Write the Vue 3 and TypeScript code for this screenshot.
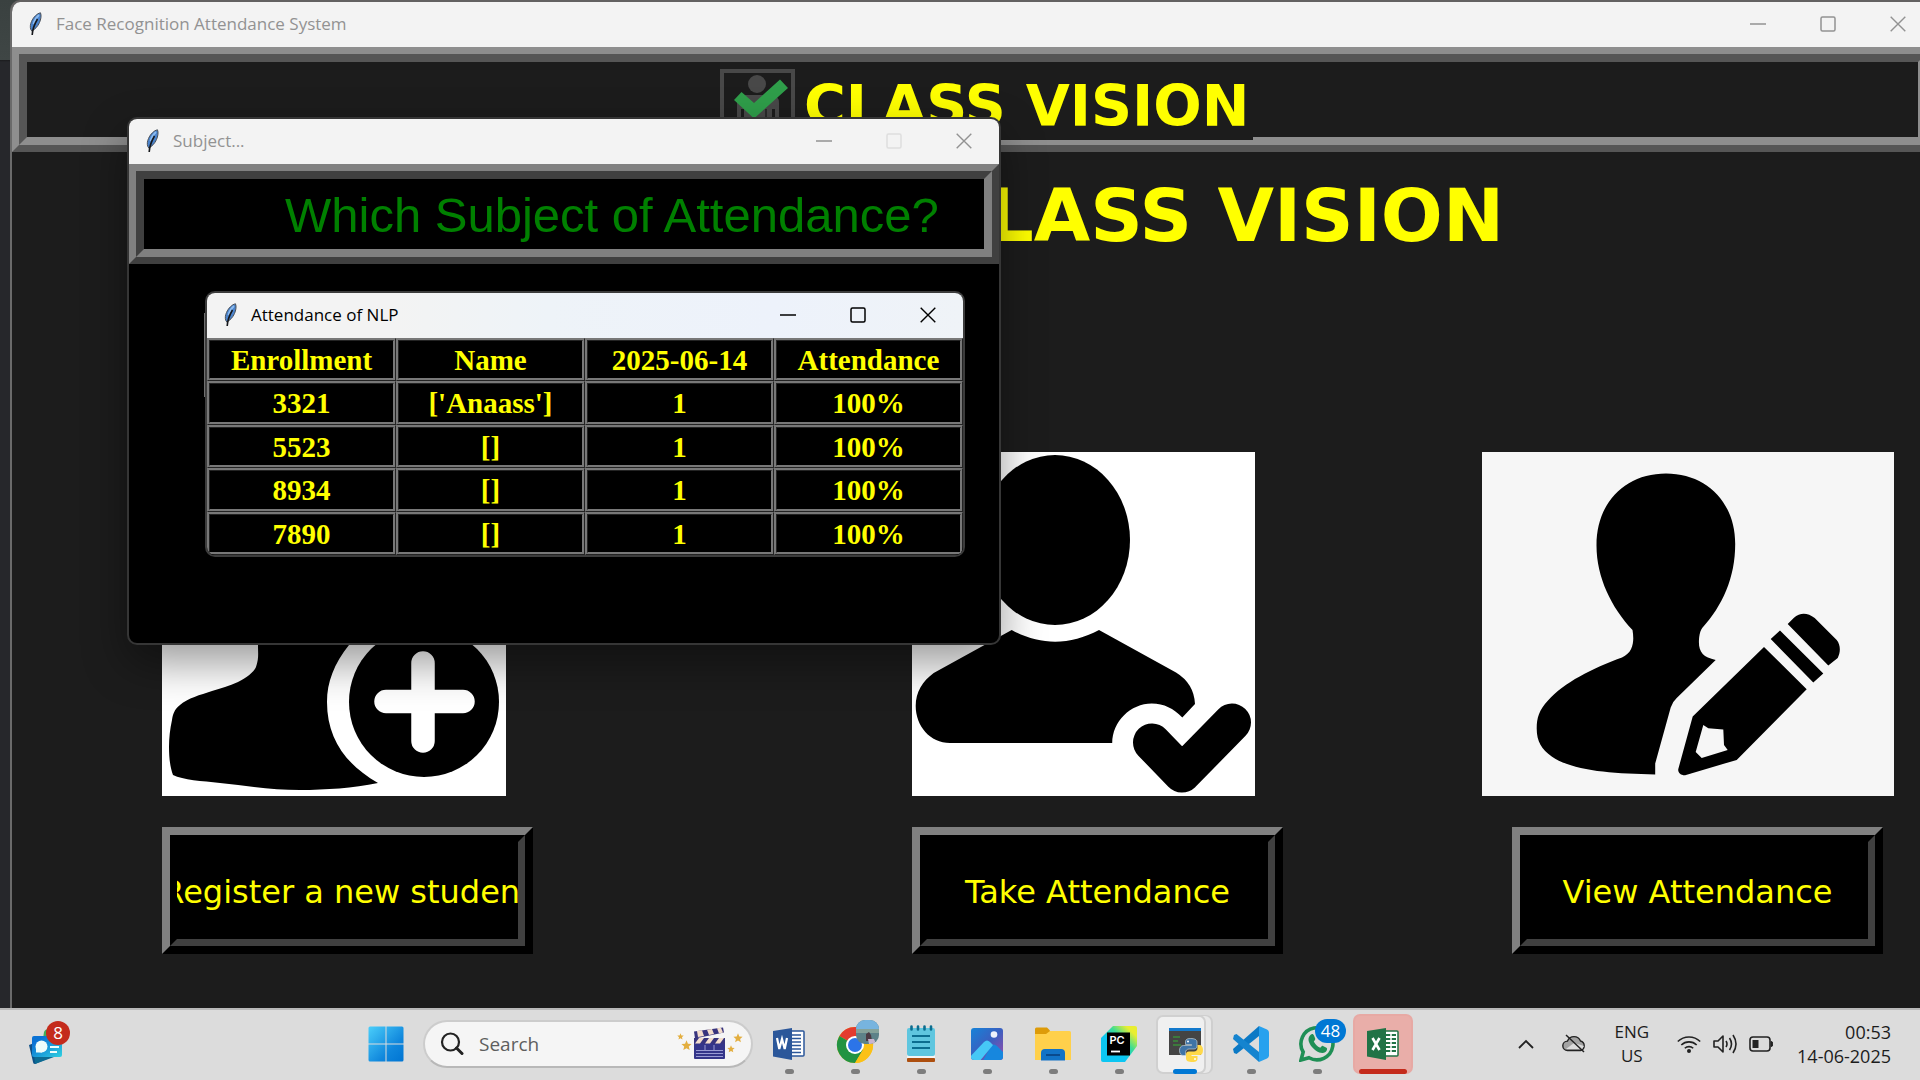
<script setup lang="ts">
interface AttendanceRow {
  enrollment: string
  name: string
  present: string
  percent: string
}

const columns: string[] = ['Enrollment', 'Name', '2025-06-14', 'Attendance']

const rows: AttendanceRow[] = [
  { enrollment: '3321', name: "['Anaass']", present: '1', percent: '100%' },
  { enrollment: '5523', name: '[]', present: '1', percent: '100%' },
  { enrollment: '8934', name: '[]', present: '1', percent: '100%' },
  { enrollment: '7890', name: '[]', present: '1', percent: '100%' },
]
</script>

<template>
  <div class="screen">
    <svg class="defs" width="0" height="0" aria-hidden="true">
      <symbol id="feather" viewBox="0 0 14 24">
        <path d="M12.5 .8C9 1.5 5.500 5 3.500 9.500 2.200 12.500 2 15 2.800 17.500l1 1.500c3-1.500 6-4.500 7.700-8.500C12.900 7.500 13.600 3.500 12.500.8z" fill="#4a83cc" stroke="#4a5058" stroke-width="1" />
        <path d="M11 3C8.500 5 6.500 8 5.500 12" fill="none" stroke="#8dbcf0" stroke-width="1.800" />
        <path d="M9.500 7C6.500 12 4.500 17 4.200 23" fill="none" stroke="#16181c" stroke-width="1.600" />
      </symbol>
      <symbol id="minimize" viewBox="0 0 16 16"><path d="M0 8h16" stroke="currentColor" stroke-width="1.300" /></symbol>
      <symbol id="maximize" viewBox="0 0 16 16"><rect x="1" y="1" width="14" height="14" rx="1.500" fill="none" stroke="currentColor" stroke-width="1.500" /></symbol>
      <symbol id="close" viewBox="0 0 16 16"><path d="M.7.700l14.600 14.600M15.300.700L.700 15.300" stroke="currentColor" stroke-width="1.400" /></symbol>
      <symbol id="star" viewBox="0 0 10 10"><path d="M5 .3l1.300 3.100 3.300.3-2.500 2.200.8 3.300L5 7.500 2.100 9.200l.8-3.300L.4 3.700l3.300-.3z" fill="#e3ae3f" /></symbol>
    </svg>

    <div class="desktop">
      <section class="window main-window" aria-label="Face Recognition Attendance System">
        <header class="titlebar inactive">
          <svg class="feather"><use href="#feather" /></svg>
          <span class="caption">Face Recognition Attendance System</span>
          <button type="button" aria-label="Minimize"><svg><use href="#minimize" /></svg></button>
          <button type="button" aria-label="Maximize"><svg><use href="#maximize" /></svg></button>
          <button type="button" aria-label="Close"><svg><use href="#close" /></svg></button>
        </header>

        <div class="ridge main-ridge">
          <div class="ridge-inner brand">
            <svg class="brand-logo" viewBox="0 0 76 74">
              <rect x="2" y="2" width="71" height="70" fill="none" stroke="#484848" stroke-width="4" />
              <circle cx="37" cy="15" r="9" fill="#484848" />
              <path d="M17 74V34q0-8 8-8h26q8 0 8 8v40h-4V40h-3v34H24V40h-3v34z" fill="#484848" />
              <path d="M28 74V48M34 74V50M40 74V48M46 74V40" stroke="#2a2a2a" stroke-width="2" />
              <path d="M14 31l7.500-8L34 34 60 10.500l8 8.500L34 49.500z" fill="#2f9e4a" />
            </svg>
            <span class="brand-name">CLASS VISION</span>
          </div>
        </div>

        <h1 class="headline">CLASS VISION</h1>

        <div class="cards">
          <div class="card">
            <svg class="art" viewBox="0 0 344 344" width="344" height="344">
              <rect width="344" height="344" fill="#fff" />
              <ellipse cx="138" cy="90" rx="72" ry="86" />
              <path d="M96 180v13c0 9 1 13-2 22-3 6-9 10-18 15-9 4-17 6-26 9-12 4-24 7-32 14-6 5-7 9-8 15-2 9-3 18-3 27 0 10 1 20 4 28 10 5 29 6 47 8 27 3 53 7 80 7 26 0 53-2 78-7l40-60V180z" />
              <path d="M262 153C225 153 202 173 187 193 172 212 165 230 165 250c0 36 18 62 51 81l30 8h98V153z" fill="#fff" />
              <circle cx="262" cy="250" r="75" />
              <path d="M261 211v78M224 249.500h77" stroke="#fff" stroke-width="23.500" stroke-linecap="round" />
            </svg>
            <button type="button" class="relief"><span>Register a new student</span></button>
          </div>
          <div class="card">
            <svg class="art" viewBox="0 0 343 344" width="343" height="344">
              <rect width="343" height="344" fill="#fff" />
              <ellipse cx="143" cy="88" rx="75" ry="85" />
              <path d="M99.700 178C128 193.500 158 193.500 187 178l77 42.500q18 11 19 31.500l-12.700 13.500c-9-9-18-14-30.600-14-21 0-39.500 18-39.500 39.500H38C18 291 3.700 274 3.700 254c0-14 7-25 18-33z" />
              <path d="M240 290.500l30 31 50-51" fill="none" stroke="#000" stroke-width="38" stroke-linecap="round" stroke-linejoin="round" />
            </svg>
            <button type="button" class="relief"><span>Take Attendance</span></button>
          </div>
          <div class="card card-shifted">
            <svg class="art" viewBox="0 0 412 344" width="412" height="344">
              <rect width="412" height="344" fill="#f6f6f6" />
              <path d="M184 21.400c-40 0-69.500 28-69.500 72 0 32 15 62 36 84.500 1.500 9 2 22-10.500 27.500-30 11-58 25-74 43-9 10-11.300 17-11.300 28 0 13 5 21 15 28 22 15 60 17 103.500 18v-11l15.500-56q2-6 6-9.500l39-38c-14-3-18-9-16.500-23 .5-4 1.500-7 3-9 20-22 33-50 33-84 0-42-29-70.500-69.200-70.500z" />
              <path d="M196.300 317l14.400-52.500L282 195l42.700 42.300-70 70.600L204 323c-4 1-8.500-2-7.700-6zM221.300 273l-7.600 27 6 6 26-8-3.700-5-.7-15.400-15-1.400z" fill-rule="evenodd" />
              <path d="M288.700 187l9.300-8.600 43.300 43.100-10 8.900zM305.700 172l6-6c7-6 14-5 21 0l22 22c4 5 4 12 1 18l-9.400 7.500z" />
            </svg>
            <button type="button" class="relief"><span>View Attendance</span></button>
          </div>
        </div>
      </section>

      <section class="window subject-window" aria-label="Subject">
        <header class="titlebar inactive">
          <svg class="feather"><use href="#feather" /></svg>
          <span class="caption">Subject...</span>
          <button type="button" aria-label="Minimize"><svg><use href="#minimize" /></svg></button>
          <button type="button" aria-label="Maximize" disabled><svg><use href="#maximize" /></svg></button>
          <button type="button" aria-label="Close"><svg><use href="#close" /></svg></button>
        </header>
        <div class="ridge">
          <div class="ridge-inner question">Which Subject of Attendance?</div>
        </div>
      </section>

      <div class="hidden-frame"></div>

      <section class="window table-window" aria-label="Attendance of NLP">
        <header class="titlebar active">
          <svg class="feather"><use href="#feather" /></svg>
          <span class="caption">Attendance of NLP</span>
          <button type="button" aria-label="Minimize"><svg><use href="#minimize" /></svg></button>
          <button type="button" aria-label="Maximize"><svg><use href="#maximize" /></svg></button>
          <button type="button" aria-label="Close"><svg><use href="#close" /></svg></button>
        </header>
        <table class="sheet">
          <thead>
            <tr><th v-for="column in columns" :key="column" scope="col">{{ column }}</th></tr>
          </thead>
          <tbody>
            <tr v-for="row in rows" :key="row.enrollment">
              <td>{{ row.enrollment }}</td>
              <td>{{ row.name }}</td>
              <td>{{ row.present }}</td>
              <td>{{ row.percent }}</td>
            </tr>
          </tbody>
        </table>
      </section>
    </div>

    <footer class="taskbar">
      <button type="button" class="widgets" aria-label="Widgets">
        <svg width="36" height="46" viewBox="0 0 36 46">
          <path d="M15 11q1-3 5-3h8v10H14z" fill="#3fae5a" />
          <path d="M0 24l8-3 17 14-19 8q-2 0-2-2z" fill="#0d4f86" />
          <path d="M5 33l20 3-19 7z" fill="#0c6b93" />
          <rect x="3" y="15" width="30" height="21" rx="2" fill="url(#wg)" />
          <circle cx="12.500" cy="25.500" r="6" fill="#eefdfb" /><path d="M7 31.500v-6h6v6z" fill="#eefdfb" />
          <path d="M21 26h9M21 31h7" stroke="#eefdfb" stroke-width="2" />
          <defs><linearGradient id="wg" x1="0" y1="0" x2="1" y2="1"><stop offset=".2" stop-color="#0a72d4" /><stop offset="1" stop-color="#2fd0e0" /></linearGradient></defs>
        </svg>
        <span class="badge badge-red">8</span>
      </button>

      <button type="button" class="start" aria-label="Start">
        <svg width="36" height="36" viewBox="0 0 36 36">
          <defs><linearGradient id="st" x1="0" y1="0" x2="36" y2="36" gradientUnits="userSpaceOnUse"><stop stop-color="#4cd0fb" /><stop offset=".65" stop-color="#0f86dc" /><stop offset="1" stop-color="#0074d2" /></linearGradient></defs>
          <path d="M2 .5h15.500v17H.500V2Q.500.500 2 .5zM18.500.500H34q1.500 0 1.500 1.500v15.500h-17zM.500 18.500h17v17H2Q.500 35.500.500 34zM18.500 18.500h17V34q0 1.500-1.500 1.500H18.500z" fill="url(#st)" />
        </svg>
      </button>

      <label class="search">
        <svg width="24" height="24" viewBox="0 0 24 24"><circle cx="10.500" cy="10" r="8.500" fill="none" stroke="#222" stroke-width="2.200" /><path d="M16.500 16l5.500 5.500" stroke="#222" stroke-width="3" stroke-linecap="round" /></svg>
        <input type="text" placeholder="Search" aria-label="Search" />
        <svg class="clapper" width="66" height="34" viewBox="0 0 66 34">
          <use href="#star" x="0" y="6" width="7" height="7" /><use href="#star" x="4" y="13" width="11" height="11" />
          <use href="#star" x="56" y="6" width="10" height="10" /><use href="#star" x="50" y="18" width="8" height="8" />
          <path d="M17 4.500L46 .5l1 5-29 6z" fill="#38347e" />
          <path d="M20 4l5-.7 2 5.600-6 1.200zM30 2.700l5-.7 2 5-5 1zM40 1.300l4-.6 2 4.800-4 1z" fill="#f3ddcb" />
          <rect x="17" y="11" width="31" height="21" rx="1" fill="#34358a" />
          <path d="M17 11h31v5.500H17z" fill="#38347e" /><path d="M22 11h5l-4 5.500h-5zM32 11h5l-4 5.500h-5zM42 11h5l-4 5.500h-5z" fill="#f3ddcb" />
          <path d="M19 23.500h27M19 26.500h27M19 29.500h27M28 18v5M37 18v5" stroke="#9a9cd4" stroke-width="1" />
        </svg>
      </label>

      <nav class="apps" aria-label="Pinned apps">
        <button type="button" class="app" aria-label="Word">
          <svg width="36" height="36" viewBox="0 0 36 36">
            <rect x="16" y="5" width="17" height="25" rx="1" fill="#fff" stroke="#2b579a" stroke-width="1.500" />
            <path d="M21 9h9M21 12.500h9M21 16h9M21 19.500h9M21 23h9M21 26.500h9" stroke="#2b579a" stroke-width="1.500" />
            <path d="M2 5l19-3v32L2 30.500z" fill="#2b579a" />
            <path d="M6 12l2.300 11 2.700-10 2.700 10L16 12" fill="none" stroke="#fff" stroke-width="2.200" />
          </svg>
        </button>
        <button type="button" class="app" aria-label="Chrome">
          <svg width="48" height="48" viewBox="0 0 48 48">
            <circle cx="24" cy="25" r="18" fill="#fbc116" />
            <path d="M24 25L8.400 16A18 18 0 0 1 39.600 16z" fill="#e33b2e" />
            <path d="M24 25L8.400 16A18 18 0 0 0 24 43l8-13z" fill="#229342" />
            <path d="M24 16h15.600A18 18 0 0 1 24 43l8-13.500z" fill="#fbc116" />
            <circle cx="24" cy="25" r="9" fill="#fff" /><circle cx="24" cy="25" r="7" fill="#2c74e8" />
            <clipPath id="av"><rect x="25" y="0" width="23" height="24" rx="9" /></clipPath>
            <g clip-path="url(#av)">
              <rect x="25" width="23" height="24" fill="#5d8289" />
              <path d="M25 0h23v9H25z" fill="#77b4df" /><path d="M25 9h23v4H25z" fill="#85a29a" />
              <path d="M35 14l3-2 2 3 1 6h-6z" fill="#4b3b44" /><path d="M37 19h6l2 5h-7z" fill="#c9b5cf" />
            </g>
          </svg>
        </button>
        <button type="button" class="app" aria-label="Notepad">
          <svg width="36" height="38" viewBox="0 0 36 38">
            <rect x="4" y="33" width="28" height="4" rx="1" fill="#ad4f0f" /><rect x="4" y="29" width="28" height="4" fill="#f4f4f4" />
            <rect x="4" y="3" width="28" height="28" rx="2" fill="#5fc6df" />
            <path d="M9 11h18M9 17h18M9 23h18" stroke="#0c6d8f" stroke-width="2" />
            <path d="M8.500 1.500v3M15 1.500v3M21.500 1.500v3M28 1.500v3" stroke="#0c6d8f" stroke-width="2.600" stroke-linecap="round" />
          </svg>
        </button>
        <button type="button" class="app" aria-label="Photos">
          <svg width="36" height="36" viewBox="0 0 36 36">
            <defs><linearGradient id="ph" x1="0" y1="0" x2="1" y2="1"><stop stop-color="#1683d8" /><stop offset=".5" stop-color="#3a5fc0" /><stop offset="1" stop-color="#a04ba8" /></linearGradient><clipPath id="phc"><rect x="2" y="2" width="32" height="32" rx="3" /></clipPath></defs>
            <g clip-path="url(#phc)"><rect x="2" y="2" width="32" height="32" fill="url(#ph)" />
              <path d="M12 38l10-18q3-3 6 0l10 10v8z" fill="#1787de" />
              <path d="M-2 34l17-18q3-3 6 0l3 3L10 36z" fill="#46c8f6" /></g>
            <circle cx="25" cy="8.500" r="3.300" fill="#eef1fb" />
          </svg>
        </button>
        <button type="button" class="app" aria-label="File Explorer">
          <svg width="36" height="36" viewBox="0 0 36 36">
            <path d="M0 3q0-1.500 1.500-1.500H12l3 3v5H0z" fill="#dd9b09" />
            <path d="M0 8h11l4-3h19.500Q36 5 36 6.500V34H0z" fill="#ffd04b" />
            <path d="M6 34.500V27q0-4 4-4h16q4 0 4 4v7.500z" fill="#1273c6" /><path d="M11 29h14" stroke="#0a4a8c" stroke-width="2" />
          </svg>
        </button>
        <button type="button" class="app" aria-label="PyCharm">
          <svg width="36" height="36" viewBox="0 0 36 36">
            <defs><linearGradient id="pc" x1="0" y1="1" x2="1" y2="0"><stop offset=".4" stop-color="#0cc6f2" /><stop offset=".62" stop-color="#3bdc94" /><stop offset=".85" stop-color="#e9ee30" /></linearGradient></defs>
            <path d="M12 0h22q2 0 2 2v18L24 36H2q-2 0-2-2V12z" fill="url(#pc)" />
            <rect x="6" y="6.500" width="23" height="23" />
            <text x="8.500" y="18" fill="#fff" font-family="Inter, sans-serif" font-weight="600" font-size="11">PC</text>
            <path d="M10 25.500h9" stroke="#fff" stroke-width="1.800" />
          </svg>
        </button>
        <button type="button" class="app app-active" aria-label="Python">
          <svg width="36" height="36" viewBox="0 0 36 36">
            <rect x="2" y="2" width="32" height="27" fill="#444" /><rect x="2" y="2" width="32" height="3" fill="#1379cc" />
            <path d="M6 11h7M6 15h5M6 19h8" stroke="#3a8c3a" stroke-width="1.300" />
            <path d="M23.500 12.500c-4 0-5 1.500-5 3.500v2.500h6v1h-8c-2.500 0-4 2-4 5s1.500 5 3.500 5h2.500v-3c0-2 1.500-3.500 3.500-3.500h5c2 0 3-1.300 3-3V16c0-2.500-2.500-3.500-6.500-3.500z" fill="#3f74a6" stroke="#d5e0e6" stroke-width=".6" />
            <path d="M25.500 36c4 0 5-1.500 5-3.500V30h-6v-1h8c2.500 0 3.500-2 3.500-5s-1.300-5-3.500-5h-2v3c0 2-1.500 3.500-3.500 3.500h-5c-2 0-3 1.300-3 3v4c0 2.500 2.500 3.500 6.500 3.500z" fill="#ffd94a" />
            <circle cx="21" cy="15.500" r="1" fill="#fff" /><circle cx="28" cy="33" r="1" fill="#fff" />
          </svg>
        </button>
        <button type="button" class="app" aria-label="Visual Studio Code">
          <svg width="36" height="36" viewBox="0 0 36 36">
            <path d="M26 0L0 23l1 4 2.500 1L26 10z" fill="#0b79c5" />
            <path d="M26 36L0 13l1-4 2.500-1L26 26z" fill="#1584cf" />
            <path d="M26 0l8 3.500q2 1 2 3v23q0 2-2 3L26 36z" fill="#27a1ee" />
          </svg>
        </button>
        <button type="button" class="app" aria-label="WhatsApp">
          <svg width="36" height="36" viewBox="0 0 36 36">
            <path d="M2 34l2.200-8A16 16 0 1 1 10 31.700z" fill="none" stroke="#1f8f55" stroke-width="3.600" />
            <path d="M12 8.500c1-1 2.500-.5 3 1l1.200 3c.3 1-.5 2-1.400 3 1.500 3 3.500 5 6.500 6.200 1-.9 1.600-2.200 2.700-1.800l3.500 1.800c1.200.8.500 3-1 4.200-2.500 2-6 1-9.500-1.200-4-2.800-7-7-7.500-10.700-.2-2.500 1-4.300 2.500-5.500z" fill="#1f8f55" />
          </svg>
          <span class="badge badge-blue">48</span>
        </button>
        <button type="button" class="app app-alert" aria-label="Excel">
          <svg width="36" height="36" viewBox="0 0 36 36">
            <rect x="16" y="5" width="17" height="25" rx="1" fill="#fff" stroke="#217346" stroke-width="1.500" />
            <path d="M21 9h10M21 13h10M21 17h10M21 21h10M21 25h10" stroke="#217346" stroke-width="2" /><path d="M26 6v23" stroke="#fff" stroke-width="1.500" />
            <path d="M2 5l19-3v32L2 30.500z" fill="#217346" />
            <path d="M7.500 12l7 12M14.500 12l-7 12" stroke="#fff" stroke-width="2.600" />
          </svg>
        </button>
      </nav>

      <div class="tray">
        <button type="button" aria-label="Show hidden icons"><svg width="16" height="10" viewBox="0 0 16 10"><path d="M1 9l7-7 7 7" fill="none" stroke="#222" stroke-width="1.800" /></svg></button>
        <button type="button" aria-label="OneDrive"><svg width="24" height="20" viewBox="0 0 24 20"><path d="M5.500 16.500a4.700 4.700 0 0 1 0-9.400A7 7 0 0 1 18.500 7a4.900 4.900 0 0 1 0 9.500z" fill="#a3a3a3" stroke="#222" stroke-width="1.400" /><path d="M4 15l8-6 10 3-2 3z" fill="#dcdcdc" /><path d="M4 1l18 17" stroke="#222" stroke-width="1.500" /></svg></button>
        <button type="button" class="language"><span>ENG</span><span>US</span></button>
        <button type="button" class="status" aria-label="Network, volume and battery">
          <svg width="24" height="20" viewBox="0 0 24 20" fill="none" stroke="#222" stroke-width="1.600"><path d="M.8 7.500a16 16 0 0 1 22.400 0M4.300 11a11 11 0 0 1 15.400 0M7.800 14.300a6 6 0 0 1 8.400 0" /><circle cx="12" cy="17" r="2" fill="#222" stroke="none" /></svg>
          <svg width="24" height="20" viewBox="0 0 24 20" fill="none" stroke="#222" stroke-width="1.600"><path d="M1 7h4l5-5v16l-5-5H1zM13 7q2 3 0 6M16.500 4q4 6 0 12M20 1q6 9 0 18" stroke-linejoin="round" /></svg>
          <svg width="24" height="20" viewBox="0 0 24 20"><rect x="1" y="3" width="20" height="14" rx="3" fill="none" stroke="#222" stroke-width="1.600" /><rect x="3.500" y="6" width="6" height="8" fill="#222" /><path d="M22 7.500q2 0 2 2.500t-2 2.500z" fill="#222" stroke="#222" /></svg>
        </button>
        <button type="button" class="clock"><span>00:53</span><span>14-06-2025</span></button>
      </div>
    </footer>
  </div>
</template>

<style>
body {
  margin: 0;
}
</style>

<style scoped>
.screen {
  display: flex;
  flex-direction: column;
  min-height: 100vh;
  overflow: hidden;
  font-family: "Open Sans", "Noto Sans", sans-serif;
}
button {
  margin: 0;
  padding: 0;
  border: 0;
  background: none;
  font: inherit;
  color: inherit;
}
.defs {
  position: absolute;
}
.desktop {
  position: relative;
  display: flex;
  flex: 1;
  padding: 2px 0 0 10px;
  background: linear-gradient(#3a4140 0, #3f4645 60px, #1b1b1d 60px, #26272b 62px, #26272b 100%);
  overflow: hidden;
}
.window {
  box-sizing: border-box;
  overflow: hidden;
  border: 2px solid #363636;
}
.main-window {
  flex: 1;
  margin-right: -15px;
  border-color: #6a6a6a;
  border-top: 0;
  border-bottom: 0;
  border-radius: 10px 0 0 0;
  background: #1c1c1c;
  box-shadow: 0 -2px 0 #636161;
}
.titlebar {
  box-sizing: border-box;
  display: flex;
  align-items: center;
  height: 45px;
  padding: 0 0 2px 16px;
  background: #f3f3f3;
  font-size: 17px;
  line-height: 24px;
}
.titlebar.inactive {
  color: #929292;
}
.titlebar.active {
  background: linear-gradient(90deg, #f3f3f3 25%, #eef3f8 45%, #edf2fb 75%, #eff3f7);
  color: #000;
}
.feather {
  width: 14px;
  height: 24px;
  margin-right: 14px;
}
.caption {
  flex: 1;
}
.titlebar button {
  display: flex;
  align-items: center;
  justify-content: center;
  width: 70px;
  height: 43px;
}
.titlebar button:disabled {
  color: #dedede;
}
.titlebar button svg {
  width: 16px;
  height: 16px;
}

/* Two-tone ridge relief around a heading */
.ridge {
  border: 7px solid;
  border-color: #808080 #404040 #404040 #808080;
}
.ridge-inner {
  border: 8px solid;
  border-color: #404040 #808080 #808080 #404040;
}
.main-ridge {
  border-color: #8e8e8e #565656 #565656 #8e8e8e;
}
.main-ridge .ridge-inner {
  border-color: #565656 #8e8e8e #8e8e8e #565656;
}
.brand {
  display: flex;
  height: 75px;
  padding-left: 693px;
}
.brand-logo {
  width: 76px;
  height: 74px;
  margin-top: 7px;
  flex: none;
}
.brand-name {
  height: 78px;
  padding: 0 4px 0 8px;
  background: #1c1c1c;
  color: #ff0;
  font: bold 57px/88px "DejaVu Sans", sans-serif;
}
.headline {
  margin: 0;
  padding: 20px 429px 0 0;
  height: 280px;
  color: #ff0;
  text-align: right;
  font: bold 73px/88px "DejaVu Sans", sans-serif;
}
.cards {
  display: grid;
  grid-template-columns: 750fr 570fr 451fr;
  padding-left: 150px;
}
.card {
  display: flex;
  flex-direction: column;
  align-items: flex-start;
  gap: 31px;
}
.art {
  display: block;
}
.relief {
  box-sizing: border-box;
  width: 371px;
  height: 127px;
  border: 8px solid;
  border-color: #808080 #000 #000 #808080;
  background: #000;
  color: #ff0;
  font: 32px/40px "DejaVu Sans", sans-serif;
}
.relief span {
  box-sizing: border-box;
  display: flex;
  align-items: center;
  justify-content: center;
  height: 100%;
  padding-top: 2px;
  border: 7px solid;
  border-color: #000 #404040 #404040 #000;
  white-space: nowrap;
  overflow: hidden;
}
.card-shifted .relief {
  margin-left: 30px;
}
.subject-window {
  position: absolute;
  left: 127px;
  top: 117px;
  width: 874px;
  height: 528px;
  border-radius: 10px;
  background: #000;
  box-shadow: 0 18px 44px rgba(0, 0, 0, 0.4);
}
.question {
  height: 70px;
  padding-left: 141px;
  color: #008000;
  font: 49px/72px "Liberation Sans", Arial, sans-serif;
}
.hidden-frame {
  position: absolute;
  left: 204px;
  top: 313px;
  width: 3px;
  height: 84px;
  background: #707070;
}
.table-window {
  position: absolute;
  left: 205px;
  top: 291px;
  width: 760px;
  height: 266px;
  border-radius: 10px;
  border-color: #3c3c3c;
  background: #000;
}
.sheet {
  width: 100%;
  height: 217px;
  table-layout: fixed;
  border-collapse: separate;
  border-spacing: 0;
  background: #000;
  color: #ff0;
  font: bold 29px/35px "Liberation Serif", "Times New Roman", serif;
}
.sheet th,
.sheet td {
  padding: 2px 0 0;
  border: 3px ridge #787878;
  text-align: center;
  vertical-align: middle;
}

.taskbar {
  display: flex;
  align-items: center;
  height: 72px;
  box-sizing: border-box;
  padding-bottom: 2px;
  border-top: 2px solid #b9b9b9;
  background: #dcdcdc;
  color: #1c1c1c;
}
.widgets {
  position: relative;
  width: 36px;
  height: 46px;
  margin-left: 29px;
}
.badge {
  position: absolute;
  top: 0;
  min-width: 24px;
  height: 24px;
  border-radius: 12px;
  color: #fff;
  font-size: 17px;
  line-height: 24px;
  text-align: center;
}
.badge-red {
  left: 17px;
  background: #c42b1c;
}
.start {
  width: 36px;
  height: 36px;
  margin-left: 303px;
}
.search {
  box-sizing: border-box;
  display: flex;
  align-items: center;
  width: 330px;
  height: 48px;
  margin: 0 3px 0 19px;
  padding: 0 8px 0 15px;
  border: 2px solid #cccccc;
  border-bottom-color: #b8b8b8;
  border-radius: 24px;
  background: #f5f5f5;
}
.search input {
  flex: 1;
  min-width: 0;
  margin-left: 15px;
  padding: 0;
  border: 0;
  outline: 0;
  background: none;
  font: 19px/26px "Open Sans", "Noto Sans", sans-serif;
}
.search input::placeholder {
  color: #5e5e5e;
  opacity: 1;
}
.apps {
  display: flex;
}
.app {
  position: relative;
  display: flex;
  align-items: center;
  justify-content: center;
  width: 66px;
  height: 60px;
}
.app > svg {
  position: relative;
  flex: none;
}
.app::after {
  content: "";
  position: absolute;
  bottom: 0;
  left: 50%;
  width: 9px;
  height: 5px;
  margin-left: -4px;
  border-radius: 3px;
  background: #7d7d7d;
}
.app-active::before,
.app-alert::before {
  content: "";
  position: absolute;
  box-sizing: border-box;
  inset: 1px 12px 0 4px;
  border-radius: 7px;
  border: 2px solid #d0d0d0;
  background: #f0f0f0;
  box-shadow: 6px 0 0 -1px #e8e8e8, 7px 0 0 0 #cfcfcf;
}
.app-alert::before {
  inset: 0 3px;
  border-color: #e7a9a4;
  background: #e9aea9;
  box-shadow: none;
}
.app-active::after {
  width: 24px;
  margin-left: -12px;
  background: #0078d4;
}
.app-alert::after {
  width: 48px;
  margin-left: -24px;
  background: #c42b1c;
}
.badge-blue {
  left: 31px;
  top: 5px;
  width: 31px;
  background: #0078d4;
}
.tray {
  display: flex;
  align-items: center;
  margin-left: auto;
  padding-right: 29px;
}
.tray button {
  display: flex;
  align-items: center;
  justify-content: center;
  margin-right: 28px;
}
.tray .language,
.tray .clock {
  flex-direction: column;
  font-size: 17px;
  line-height: 24px;
}
.tray .status {
  gap: 12px;
  margin-right: 24px;
}
.tray .clock {
  align-items: flex-end;
  margin-right: 0;
  font-size: 18px;
}
</style>
